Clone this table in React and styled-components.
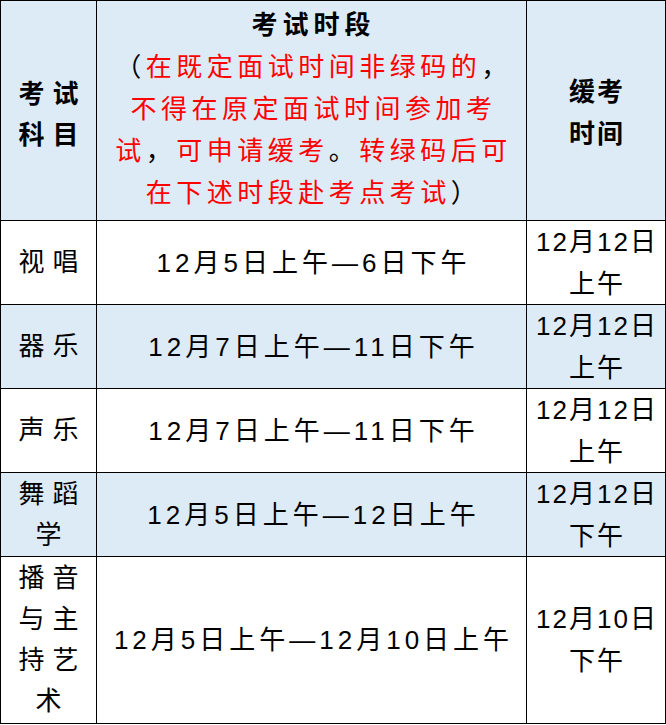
import React from 'react';
import styled, { createGlobalStyle } from 'styled-components';

const GlobalStyle = createGlobalStyle`
	body {
		margin: 0;
		background: #ffffff;
		font-family: 'Liberation Sans', 'Noto Sans CJK SC', sans-serif;
		color: #000000;
	}
`;

const Table = styled.div`
	display: grid;
	grid-template-columns: 96px 430px 139px;
	grid-template-rows: 220px repeat(4, 84px) 167px;
	width: 666px;
	border-left: 1px solid #000;
	border-top: 1px solid #000;
	box-sizing: border-box;
`;

const Cell = styled.div`
	display: flex;
	align-items: center;
	justify-content: center;
	text-align: center;
	box-sizing: border-box;
	border-right: 1px solid #000;
	border-bottom: 1px solid #000;
	background-color: ${props => (props.$shaded ? '#ddebf7' : '#ffffff')};
	font-size: 26px;
	line-height: 42px;
	font-weight: ${props => (props.$bold ? 700 : 400)};
	padding-top: ${props => (props.$bold ? '8px' : '0')};
`;

const SubjectCell = styled(Cell)`
	padding-left: 8px;
	letter-spacing: 8px;
	line-height: 41px;
`;

const PeriodCell = styled(Cell)`
	padding-left: 4px;
	letter-spacing: 4px;
	white-space: nowrap;
`;

const DelayCell = styled(Cell)`
	padding-left: 2px;
	letter-spacing: 2px;
	padding-top: ${props => (props.$bold ? '4px' : '0')};
`;

const HeaderStack = styled.div`
	display: flex;
	flex-direction: column;
	align-items: center;
	margin-top: -4px;
`;

const Title = styled.div`
	font-weight: 700;
	letter-spacing: 5px;
`;

const Note = styled.div`
	font-weight: 400;
	letter-spacing: 4.5px;
`;

const Red = styled.span`
	color: #ff0000;
`;

const rows = [
	{ subject: '视唱', period: '12月5日上午—6日下午', delay: '12月12日上午' },
	{ subject: '器乐', period: '12月7日上午—11日下午', delay: '12月12日上午', shaded: true },
	{ subject: '声乐', period: '12月7日上午—11日下午', delay: '12月12日上午' },
	{ subject: '舞蹈学', period: '12月5日上午—12日上午', delay: '12月12日下午', shaded: true },
	{ subject: '播音与主持艺术', period: '12月5日上午—12月10日上午', delay: '12月10日下午' }
];

const App = () => {
	return (
		<>
			<GlobalStyle />
			<Table>
				<SubjectCell $shaded $bold>考试科目</SubjectCell>
				<PeriodCell $shaded>
					<HeaderStack>
						<Title>考试时段</Title>
						<Note>
							（<Red>在既定面试时间非绿码的</Red>，
							<br />
							<Red>不得在原定面试时间参加考</Red>
							<br />
							<Red>试</Red>，<Red>可申请缓考</Red>。<Red>转绿码后可</Red>
							<br />
							<Red>在下述时段赴考点考试</Red>）
						</Note>
					</HeaderStack>
				</PeriodCell>
				<DelayCell $shaded $bold>
					缓考
					<br />
					时间
				</DelayCell>

				{rows.map(row => (
					<React.Fragment key={row.subject}>
						<SubjectCell $shaded={row.shaded}>{row.subject}</SubjectCell>
						<PeriodCell $shaded={row.shaded}>{row.period}</PeriodCell>
						<DelayCell $shaded={row.shaded}>{row.delay}</DelayCell>
					</React.Fragment>
				))}
			</Table>
		</>
	);
};

export default App;
